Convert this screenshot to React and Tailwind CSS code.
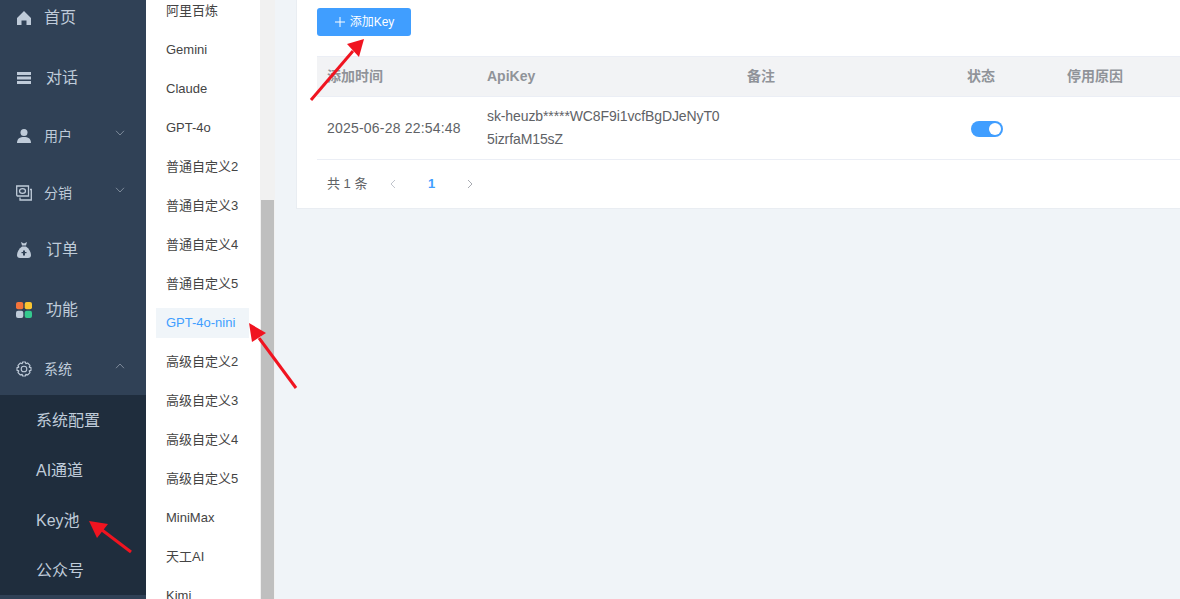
import React from "react";

const FONT = "[font-family:'Liberation_Sans','Noto_Sans_CJK_SC',sans-serif]";

const HomeIcon = () => (
  <svg width="16" height="16" viewBox="0 0 16 16" fill="#bfcbd9"><path d="M8 1 L15 8 V15 H10.5 V10.5 H5.5 V15 H1 V8 Z" /></svg>
);
const BarsIcon = () => (
  <svg width="16" height="16" viewBox="0 0 16 16" fill="#bfcbd9"><rect x="1" y="2" width="14" height="3" /><rect x="1" y="6.5" width="14" height="3" /><rect x="1" y="11" width="14" height="3" /></svg>
);
const UserIcon = () => (
  <svg width="16" height="16" viewBox="0 0 16 16" fill="#bfcbd9"><circle cx="8" cy="4.5" r="3.5" /><path d="M1 15 C1 10.5 4 9 8 9 C12 9 15 10.5 15 15 Z" /></svg>
);
const MoneyIcon = () => (
  <svg width="16" height="16" viewBox="0 0 16 16" fill="none" stroke="#bfcbd9" strokeWidth="1.3"><path d="M0.7 1 H12.5 V11 H2 Q0.7 11 0.7 9.7 Z" /><ellipse cx="6.5" cy="6" rx="3" ry="2.3" /><path d="M14 4.5 H15.3 V15 H4 V12.5" /></svg>
);
const BagIcon = () => (
  <svg width="16" height="18" viewBox="0 0 16 18" fill="#bfcbd9"><path d="M5 1 L8 2.5 L11 1 L10 4.5 H6 Z" /><path d="M6 5.5 H10 C13 7.5 15 11 15 14 C15 16 14 17 12 17 H4 C2 17 1 16 1 14 C1 11 3 7.5 6 5.5 Z" /><rect x="7" y="9.5" width="2" height="5" fill="#304156" /><rect x="5.5" y="11" width="5" height="1.2" fill="#304156" /></svg>
);
const GridIcon = () => (
  <svg width="16" height="16" viewBox="0 0 16 16"><rect x="0" y="0" width="7.3" height="7.3" rx="2" fill="#f4743b" /><rect x="8.7" y="0" width="7.3" height="7.3" rx="2" fill="#fbc531" /><rect x="0" y="8.7" width="7.3" height="7.3" rx="2" fill="#bfcbd9" /><rect x="8.7" y="8.7" width="7.3" height="7.3" rx="2" fill="#34c98e" /></svg>
);
const GearIcon = () => (
  <svg width="18" height="18" viewBox="0 0 16 16" fill="none" stroke="#bfcbd9" strokeWidth="1.1"><circle cx="8" cy="8" r="2.8" /><path d="M6.6 1 H9.4 L9.9 2.8 L11.6 2 L14 4.4 L13.2 6.1 L15 6.6 V9.4 L13.2 9.9 L14 11.6 L11.6 14 L9.9 13.2 L9.4 15 H6.6 L6.1 13.2 L4.4 14 L2 11.6 L2.8 9.9 L1 9.4 V6.6 L2.8 6.1 L2 4.4 L4.4 2 L6.1 2.8 Z" strokeLinejoin="round" /></svg>
);
const Chevron = ({ up }) => (
  <svg width="10" height="6" viewBox="0 0 10 6" fill="none" stroke="#909cab" strokeWidth="0.8"><path d={up ? "M1 5.2 L5 1 L9 5.2" : "M1 0.8 L5 5 L9 0.8"} /></svg>
);

const navItems = [
  { label: "首页", icon: <HomeIcon />, h: "h-[60px]", text: "text-base pl-[12px]", pt: "pt-[2px]" },
  { label: "对话", icon: <BarsIcon />, h: "h-[60px]", text: "text-base pl-[14px]", pt: "pt-[2px]" },
  { label: "用户", icon: <UserIcon />, h: "h-[58px]", text: "text-sm pl-[12px]", chev: "down", pt: "" },
  { label: "分销", icon: <MoneyIcon />, h: "h-[55px]", text: "text-sm pl-[12px]", chev: "down", pt: "" },
  { label: "订单", icon: <BagIcon />, h: "h-[59px]", text: "text-base pl-[14px]", pt: "" },
  { label: "功能", icon: <GridIcon />, h: "h-[60px]", text: "text-base pl-[14px]", pt: "pt-[2px]" },
  { label: "系统", icon: <GearIcon />, h: "h-[56px]", text: "text-sm pl-[12px]", chev: "up", pt: "pt-[3px]" },
];

const subItems = ["系统配置", "AI通道", "Key池", "公众号"];

const menuItems = [
  "阿里百炼", "Gemini", "Claude", "GPT-4o", "普通自定义2", "普通自定义3", "普通自定义4", "普通自定义5",
  "GPT-4o-nini", "高级自定义2", "高级自定义3", "高级自定义4", "高级自定义5", "MiniMax", "天工AI", "Kimi",
];

function Sidebar() {
  return (
    <aside className="w-[146px] shrink-0 bg-[#304156] overflow-hidden">
      <div className="-mt-[13px]">
        {navItems.map((n) => (
          <div key={n.label} className={`${n.h} ${n.pt} flex items-center pl-[16px] text-[#bfcbd9]`}>
            <span className="w-[16px] flex justify-center shrink-0">{n.icon}</span>
            <span className={`${n.text} flex-1`}>{n.label}</span>
            {n.chev && (
              <span className="w-[31px] -mt-[6px] flex">
                <Chevron up={n.chev === "up"} />
              </span>
            )}
          </div>
        ))}
      </div>
      <div className="bg-[#1f2d3d] h-[200px]">
        {subItems.map((s) => (
          <div key={s} className="h-[50px] pt-[2px] flex items-center pl-[36px] text-base text-[#bfcbd9]">{s}</div>
        ))}
      </div>
    </aside>
  );
}

function ChannelMenu() {
  return (
    <div className="w-[114px] shrink-0 bg-white overflow-hidden">
      <div className="-mt-[4px] flex flex-col gap-[9px] pl-[10px]">
        {menuItems.map((m) => {
          const active = m === "GPT-4o-nini";
          return (
            <div
              key={m}
              className={`h-[30px] w-[93px] shrink-0 flex items-center pl-[10px] text-[13px] ${active ? "bg-[#f0f5f9] text-[#409eff]" : "text-[#444444]"}`}
            >
              {m}
            </div>
          );
        })}
      </div>
    </div>
  );
}

function Scrollbar() {
  return (
    <div className="w-[15px] shrink-0 bg-[#f1f1f1] pl-[1px] pt-[200px]">
      <div className="h-[399px] w-[13px] bg-[#bfbfbf]" />
    </div>
  );
}

const colClass = ["w-[160px]", "w-[260px]", "w-[220px]", "w-[100px]", "flex-1"];
const headers = ["添加时间", "ApiKey", "备注", "状态", "停用原因"];

function Card() {
  return (
    <div className="h-[209px] bg-white border-l border-b border-[#e9edf2] pl-[20px] pt-[8px]">
      <button className="w-[94px] h-[28px] rounded-[3px] bg-[#409eff] text-white text-xs flex items-center justify-center gap-[4px]">
        <svg width="12" height="12" viewBox="0 0 12 12" stroke="#fff" strokeWidth="1" fill="none"><path d="M6 1 V11 M1 6 H11" /></svg>
        <span>添加Key</span>
      </button>
      <div className="mt-[20px] h-[41px] pb-[1px] flex items-center bg-[#f2f3f5] border-t border-b border-[#ebeef5] text-sm font-bold text-[#909399]">
        {headers.map((h, i) => (
          <div key={h} className={`${colClass[i]} pl-[10px]`}>{h}</div>
        ))}
      </div>
      <div className="h-[63px] flex items-center border-b border-[#ebeef5] text-sm text-[#606266]">
        <div className={`${colClass[0]} pl-[10px] tracking-[0.2px]`}>2025-06-28 22:54:48</div>
        <div className={`${colClass[1]} pl-[10px] leading-[23px] whitespace-nowrap tracking-[-0.1px]`}>
          sk-heuzb*****WC8F9i1vcfBgDJeNyT0
          <br />
          5izrfaM15sZ
        </div>
        <div className={colClass[2]} />
        <div className={`${colClass[3]} pl-[14px] pt-[1px]`}>
          <div className="w-[32px] h-[16px] rounded-full bg-[#409eff] flex items-center justify-end pr-[2px]">
            <div className="w-[12px] h-[12px] rounded-full bg-white" />
          </div>
        </div>
        <div className={colClass[4]} />
      </div>
      <div className="h-[48px] flex items-center pl-[10px] text-[13px] text-[#606266]">
        <span className="w-[61px]">共 1 条</span>
        <svg width="10" height="10" viewBox="0 0 10 10" fill="none" stroke="#c0c4cc" strokeWidth="1"><path d="M7 1 L3 5 L7 9" /></svg>
        <span className="w-[67px] text-center font-bold text-[#409eff]">1</span>
        <svg width="10" height="10" viewBox="0 0 10 10" fill="none" stroke="#a8abb2" strokeWidth="1"><path d="M3 1 L7 5 L3 9" /></svg>
      </div>
    </div>
  );
}

function Arrows() {
  return (
    <svg className="absolute inset-0 pointer-events-none" width="1180" height="599" viewBox="0 0 1180 599">
      <g stroke="#f01420" strokeWidth="3" fill="#f01420">
        <line x1="311" y1="100" x2="353" y2="51" />
        <line x1="296" y1="388" x2="259" y2="338" />
        <line x1="131" y1="552" x2="102" y2="530" />
      </g>
      <g fill="#f01420">
        <polygon points="364,39 347,44 359,57" />
        <polygon points="249,323 266,333 252,342" />
        <polygon points="89,521 108,524 97,538" />
      </g>
    </svg>
  );
}

export default function App() {
  return (
    <div className={`relative w-[1180px] h-[599px] overflow-hidden flex bg-[#f0f4f8] ${FONT}`}>
      <Sidebar />
      <ChannelMenu />
      <Scrollbar />
      <main className="flex-1 pl-[21px]">
        <Card />
      </main>
      <Arrows />
    </div>
  );
}
